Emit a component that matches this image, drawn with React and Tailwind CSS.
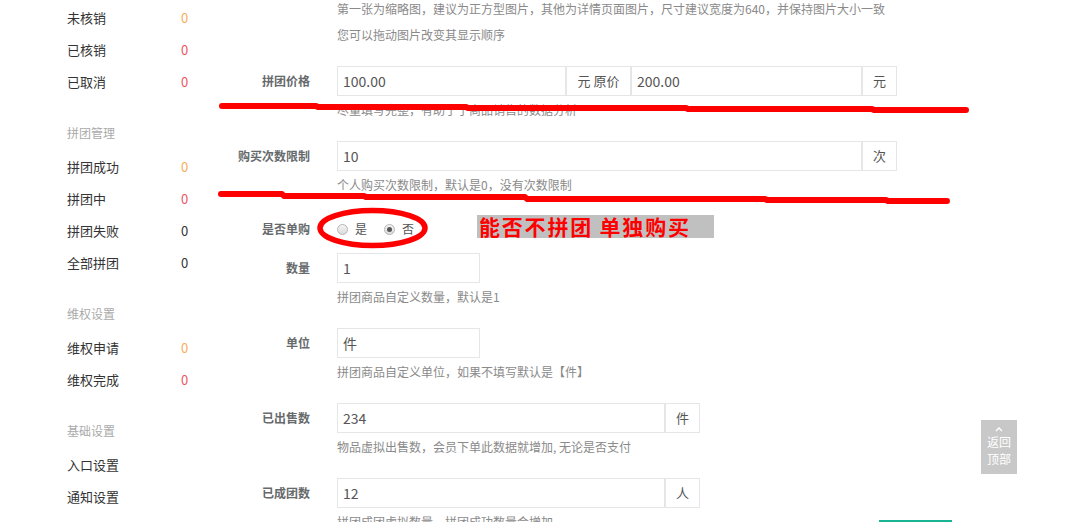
import React from "react";

const font = { fontFamily: '"Noto Sans CJK SC", "Noto Sans", sans-serif' };

function SideItem({ label, value, color }) {
  return (
    <div className="flex h-8 items-center text-[13px] text-[#333]">
      <span className="w-[114px]">{label}</span>
      <span className={color}>{value}</span>
    </div>
  );
}

function SideHeader({ label }) {
  return (
    <div className="mt-[19px] mb-[2px] flex h-8 items-center text-[12px] text-[#aaa]">{label}</div>
  );
}

function Label({ children }) {
  return (
    <div className="w-[100px] shrink-0 text-right text-[12px] font-bold text-[#676a6c]">{children}</div>
  );
}

function Input({ value, w }) {
  return (
    <div className={`flex h-[30px] items-center border border-[#e5e6e7] pl-[5px] text-[14px] text-[#555] ${w}`}>
      {value}
    </div>
  );
}

function Addon({ children, w }) {
  return (
    <div className={`flex h-[30px] items-center justify-center border border-[#e5e6e7] bg-white text-[13px] text-[#555] ${w}`}>
      {children}
    </div>
  );
}

function Help({ children }) {
  return <div className="mt-[6px] ml-[127px] text-[12px] leading-4 text-[#8a8a8a] whitespace-nowrap">{children}</div>;
}

function Row({ label, children, className = "" }) {
  return (
    <div className={`flex items-center gap-[27px] ${className}`}>
      <Label>{label}</Label>
      <div className="flex">{children}</div>
    </div>
  );
}

function Radio({ checked }) {
  return (
    <span className="flex h-[11px] w-[11px] items-center justify-center rounded-full border border-[#b5b5b5] bg-gradient-to-b from-[#f4f4f4] to-[#dcdcdc]">
      {checked && <span className="h-[5px] w-[5px] rounded-full bg-[#555]" />}
    </span>
  );
}

export default function App() {
  const orange = "text-[#f8ac59]";
  const red = "text-[#ed5565]";
  const dark = "text-[#333]";
  return (
    <div className="relative h-[522px] w-[1071px] overflow-hidden bg-white" style={font}>
      <div className="flex">
        <aside className="w-[210px] shrink-0 pl-[67px] pt-[2px]">
          <SideItem label="未核销" value="0" color={orange} />
          <SideItem label="已核销" value="0" color={red} />
          <SideItem label="已取消" value="0" color={red} />
          <SideHeader label="拼团管理" />
          <SideItem label="拼团成功" value="0" color={orange} />
          <SideItem label="拼团中" value="0" color={red} />
          <SideItem label="拼团失败" value="0" color={dark} />
          <SideItem label="全部拼团" value="0" color={dark} />
          <SideHeader label="维权设置" />
          <SideItem label="维权申请" value="0" color={orange} />
          <SideItem label="维权完成" value="0" color={red} />
          <SideHeader label="基础设置" />
          <SideItem label="入口设置" value="" color={dark} />
          <SideItem label="通知设置" value="" color={dark} />
        </aside>

        <main className="flex-1">
          <div className="mt-[-4px] ml-[127px] text-[12px] leading-[26px] text-[#8a8a8a] whitespace-nowrap">
            <div>第一张为缩略图，建议为正方型图片，其他为详情页面图片，尺寸建议宽度为640，并保持图片大小一致</div>
            <div>您可以拖动图片改变其显示顺序</div>
          </div>

          <Row label="拼团价格" className="mt-[18px]">
            <Input value="100.00" w="w-[229px]" />
            <Addon w="w-[65px]">元 原价</Addon>
            <Input value="200.00" w="w-[231px]" />
            <Addon w="w-[35px]">元</Addon>
          </Row>
          <Help>尽量填写完整，有助于于商品销售的数据分析</Help>

          <Row label="购买次数限制" className="mt-[23px]">
            <Input value="10" w="w-[525px]" />
            <Addon w="w-[35px]">次</Addon>
          </Row>
          <Help>个人购买次数限制，默认是0，没有次数限制</Help>

          <div className="mt-[26px] flex h-[20px] items-center gap-[27px]">
            <Label>是否单购</Label>
            <div className="flex items-center text-[12px] text-[#555]">
              <Radio />
              <span className="ml-[7px]">是</span>
              <span className="ml-[17px]"><Radio checked /></span>
              <span className="ml-[7px]">否</span>
            </div>
          </div>

          <Row label="数量" className="mt-[14px]">
            <Input value="1" w="w-[143px]" />
          </Row>
          <Help>拼团商品自定义数量，默认是1</Help>

          <Row label="单位" className="mt-[23px]">
            <Input value="件" w="w-[143px]" />
          </Row>
          <Help>拼团商品自定义单位，如果不填写默认是【件】</Help>

          <Row label="已出售数" className="mt-[23px]">
            <Input value="234" w="w-[328px]" />
            <Addon w="w-[35px]">件</Addon>
          </Row>
          <Help>物品虚拟出售数，会员下单此数据就增加, 无论是否支付</Help>

          <Row label="已成团数" className="mt-[23px]">
            <Input value="12" w="w-[328px]" />
            <Addon w="w-[35px]">人</Addon>
          </Row>
          <Help>拼团成团虚拟数量，拼团成功数量会增加</Help>
        </main>
      </div>

      <svg className="pointer-events-none absolute left-0 top-0" width="1071" height="522" viewBox="0 0 1071 522">
        <polyline
          points="222,106 316,106 318,107 466,107 468,108 686,108 688,109 872,109 874,110 966,110"
          fill="none" stroke="#ff0000" strokeWidth="6" strokeLinecap="round" strokeLinejoin="round" />
        <polyline
          points="221,194 282,194 284,196 364,196 366,197 525,197 527,199 765,199 767,200 886,200 888,201 947,201"
          fill="none" stroke="#ff0000" strokeWidth="6" strokeLinecap="round" strokeLinejoin="round" />
        <ellipse cx="372.5" cy="228" rx="52.5" ry="17.5" fill="none" stroke="#ff0000" strokeWidth="5.5" />
      </svg>

      <div className="absolute left-[477px] top-[215px] flex h-[23px] w-[237px] items-center bg-[#c0c0c0] pl-[2px] text-[21px] font-bold leading-none tracking-[1.8px] text-[#ff0000] whitespace-nowrap">
        能否不拼团 单独购买
      </div>

      <div className="absolute left-[981px] top-[420px] flex h-[54px] w-[36px] flex-col items-center bg-[#c8c8c8] text-[12px] leading-[17px] text-white">
        <svg className="mt-[7px]" width="8" height="5" viewBox="0 0 8 5">
          <polyline points="1,4 4,1 7,4" fill="none" stroke="#fff" strokeWidth="1.3" />
        </svg>
        <span className="mt-[1px]">返回</span>
        <span>顶部</span>
      </div>

      <div className="absolute left-[879px] top-[520px] h-[2px] w-[73px] bg-[#1ab394]" />
    </div>
  );
}
